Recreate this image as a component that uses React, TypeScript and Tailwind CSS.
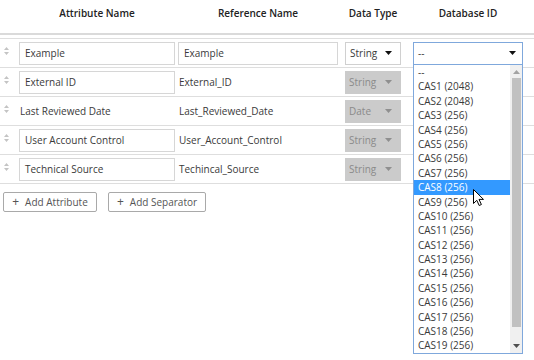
import React from 'react'

type Row = {
  attr: string
  attrInput: boolean
  ref: string
  refInput: boolean
  type: string
  disabled: boolean
  db: boolean
}

const rows: Row[] = [
  { attr: 'Example', attrInput: true, ref: 'Example', refInput: true, type: 'String', disabled: false, db: true },
  { attr: 'External ID', attrInput: true, ref: 'External_ID', refInput: false, type: 'String', disabled: true, db: false },
  { attr: 'Last Reviewed Date', attrInput: false, ref: 'Last_Reviewed_Date', refInput: false, type: 'Date', disabled: true, db: false },
  { attr: 'User Account Control', attrInput: true, ref: 'User_Account_Control', refInput: false, type: 'String', disabled: true, db: false },
  { attr: 'Technical Source', attrInput: true, ref: 'Techincal_Source', refInput: false, type: 'String', disabled: true, db: false },
]

const options = [
  '--',
  'CAS1 (2048)',
  'CAS2 (2048)',
  ...Array.from({ length: 17 }, (_, i) => `CAS${i + 3} (256)`),
]

function Caret({ color }: { color: string }) {
  return (
    <svg width="7" height="4" viewBox="0 0 7 4">
      <path d="M0 0h7L3.5 4z" fill={color} />
    </svg>
  )
}

function Handle() {
  return (
    <svg width="5" height="8" viewBox="0 0 5 8" className="mt-[-4px]">
      <path d="M2.5 0L5 3H0z M2.5 8L0 5h5z" fill="#c4c4c4" />
    </svg>
  )
}

export default function App() {
  return (
    <div className="relative w-[534px] h-[360px] overflow-hidden bg-white text-[10px] text-[#3a3a3a] font-['Open_Sans',sans-serif]">
      {/* Header */}
      <div className="flex h-[33px] pt-[5px] leading-[16px] font-semibold text-[#222]">
        <div className="w-[19px]" />
        <div className="w-[156px] text-center">Attribute Name</div>
        <div className="w-[3px]" />
        <div className="w-[160px] text-center">Reference Name</div>
        <div className="w-[7px]" />
        <div className="w-[56px] text-center">Data Type</div>
        <div className="w-[12px]" />
        <div className="w-[110px] text-center">Database ID</div>
      </div>
      <div className="h-[2px] bg-[#dadada]" />
      <div className="h-[3px]" />

      {/* Rows */}
      <div className="border-b border-[#dedede]">
        {rows.map((r) => (
          <div key={r.attr} className="flex h-[29px] items-center border-t border-[#dedede]">
            <div className="w-[19px] flex justify-center pr-[7px]">
              <Handle />
            </div>
            <div className="w-[156px]">
              {r.attrInput ? (
                <div className="h-[23px] border border-[#d6d6d6] flex items-center pl-[5px]">{r.attr}</div>
              ) : (
                <div className="pl-[1px]">{r.attr}</div>
              )}
            </div>
            <div className="w-[3px]" />
            <div className="w-[160px]">
              {r.refInput ? (
                <div className="h-[23px] border border-[#d6d6d6] flex items-center pl-[5px]">{r.ref}</div>
              ) : (
                <div className="pl-[1px]">{r.ref}</div>
              )}
            </div>
            <div className="w-[7px]" />
            <div className="w-[56px]">
              {r.disabled ? (
                <div className="h-[23px] bg-[#cbcbcb] text-[#8a8a8a] flex items-center justify-between pl-[4px] pr-[9px]">
                  {r.type}
                  <Caret color="#8f8f8f" />
                </div>
              ) : (
                <div className="h-[23px] border border-[#d0d0d0] flex items-center justify-between pl-[4px] pr-[8px]">
                  {r.type}
                  <Caret color="#111" />
                </div>
              )}
            </div>
            <div className="w-[12px]" />
            <div className="w-[110px]">
              {r.db && (
                <div className="h-[23px] border border-[#7fa8dc] flex items-center justify-between pl-[4px] pr-[6px]">
                  --
                  <Caret color="#111" />
                </div>
              )}
            </div>
          </div>
        ))}
      </div>

      {/* Buttons */}
      <div className="flex gap-[11px] mt-[8px] pl-[3px] text-[#555]">
        <button className="h-[20px] w-[94px] border border-[#a9a9a9] rounded-[2px] flex items-center justify-center gap-[6px]">
          <span className="text-[12px] leading-none">+</span>
          <span>Add Attribute</span>
        </button>
        <button className="h-[20px] w-[98px] border border-[#a9a9a9] rounded-[2px] flex items-center justify-center gap-[6px]">
          <span className="text-[12px] leading-none">+</span>
          <span>Add Separator</span>
        </button>
      </div>

      {/* Open dropdown list */}
      <div className="absolute left-[413px] top-[64px] w-[110px] h-[290px] border border-[#7fa8dc] bg-white flex">
        <div className="flex-1">
          {options.map((o) => (
            <div
              key={o}
              className={
                'h-[14.4px] leading-[14.4px] pl-[4px] ' +
                (o === 'CAS8 (256)' ? 'bg-[#3399ff] text-white' : 'text-[#3a3a3a]')
              }
            >
              {o}
            </div>
          ))}
        </div>
        <div className="w-[12px] bg-[#f0f0f0] flex flex-col items-center">
          <div className="h-[13px] flex items-center">
            <svg width="7" height="4" viewBox="0 0 7 4">
              <path d="M3.5 0L7 4H0z" fill="#a3a3a3" />
            </svg>
          </div>
          <div className="w-[9px] h-[249px] bg-[#c1c1c1]" />
          <div className="flex-1" />
          <div className="h-[14px] flex items-center">
            <svg width="7" height="4" viewBox="0 0 7 4">
              <path d="M0 0h7L3.5 4z" fill="#505050" />
            </svg>
          </div>
        </div>
      </div>

      {/* Mouse cursor */}
      <svg className="absolute left-[473px] top-[189px]" width="11" height="17" viewBox="0 0 11 17">
        <path d="M0.5 0.5v14l3.3-3.2 2.4 5.2 2.2-1-2.4-5.1h4.5z" fill="#fff" stroke="#000" strokeWidth="1" strokeLinejoin="round" />
      </svg>
    </div>
  )
}
